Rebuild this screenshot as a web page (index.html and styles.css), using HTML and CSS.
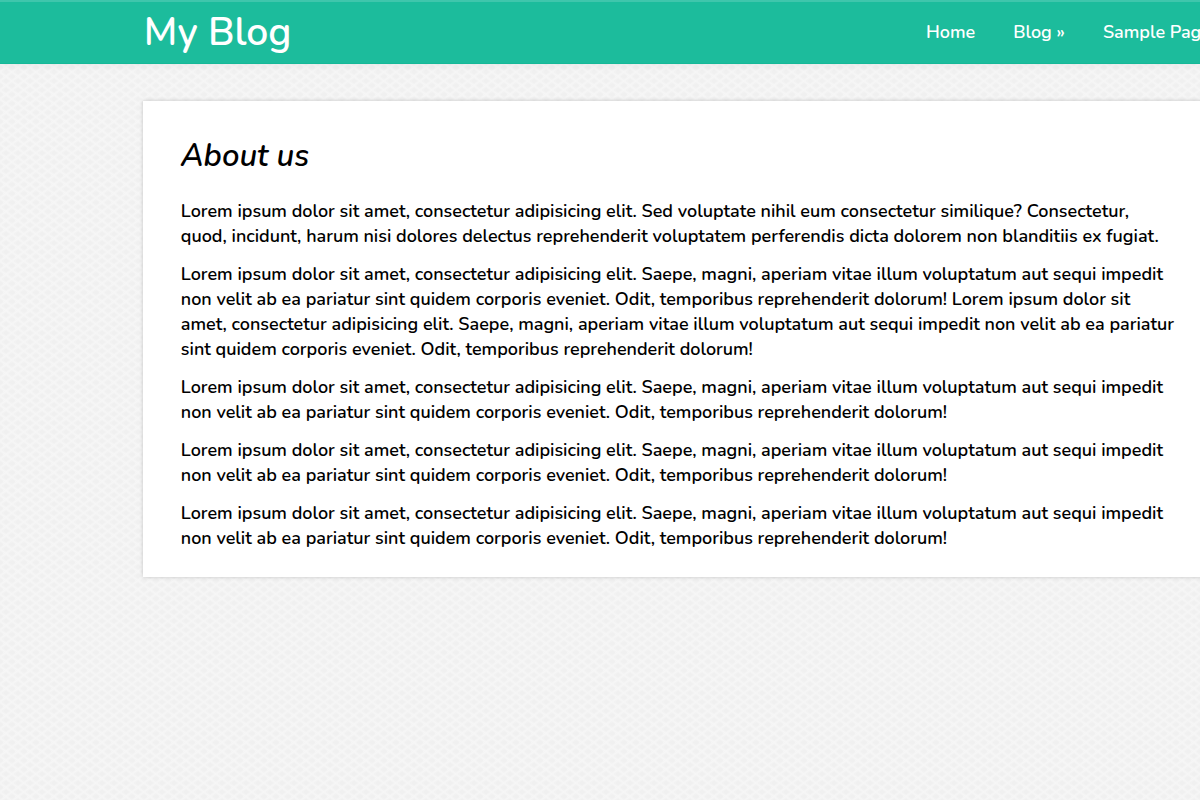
FILE: index.html
```html
<!DOCTYPE html>
<html lang="en">
<head>
    <meta charset="UTF-8">
    <meta name="viewport" content="width=device-width, initial-scale=1">
    <title>My Blog</title>
    <link rel="stylesheet" href="styles.css">
</head>
<body>
    <header class="site-header">
        <div class="container header-inner">
            <a class="logo" href="#">My Blog</a>
            <nav class="main-nav">
                <a href="#">Home</a>
                <a href="#">Blog »</a>
                <a href="#">Sample Page</a>
            </nav>
        </div>
    </header>

    <main class="container">
        <article class="card">
            <h1>About us</h1>
            <p>Lorem ipsum dolor sit amet, consectetur adipisicing elit. Sed voluptate nihil eum consectetur similique? Consectetur, quod, incidunt, harum nisi dolores delectus reprehenderit voluptatem perferendis dicta dolorem non blanditiis ex fugiat.</p>
            <p>Lorem ipsum dolor sit amet, consectetur adipisicing elit. Saepe, magni, aperiam vitae illum voluptatum aut sequi impedit non velit ab ea pariatur sint quidem corporis eveniet. Odit, temporibus reprehenderit dolorum! Lorem ipsum dolor sit amet, consectetur adipisicing elit. Saepe, magni, aperiam vitae illum voluptatum aut sequi impedit non velit ab ea pariatur sint quidem corporis eveniet. Odit, temporibus reprehenderit dolorum!</p>
            <p>Lorem ipsum dolor sit amet, consectetur adipisicing elit. Saepe, magni, aperiam vitae illum voluptatum aut sequi impedit non velit ab ea pariatur sint quidem corporis eveniet. Odit, temporibus reprehenderit dolorum!</p>
            <p>Lorem ipsum dolor sit amet, consectetur adipisicing elit. Saepe, magni, aperiam vitae illum voluptatum aut sequi impedit non velit ab ea pariatur sint quidem corporis eveniet. Odit, temporibus reprehenderit dolorum!</p>
            <p>Lorem ipsum dolor sit amet, consectetur adipisicing elit. Saepe, magni, aperiam vitae illum voluptatum aut sequi impedit non velit ab ea pariatur sint quidem corporis eveniet. Odit, temporibus reprehenderit dolorum!</p>
        </article>
    </main>
</body>
</html>
```

FILE: styles.css
```css
* {
    box-sizing: border-box;
}

body {
    margin: 0;
    min-height: 100vh;
    overflow-x: hidden;
    font-family: Nunito, "Open Sans", sans-serif;
    font-size: 18px;
    font-weight: 600;
    line-height: 25px;
    color: #000;
    background-color: #f0f0f0;
    background-image:
        linear-gradient(to top right, transparent 35%, #f6f6f6 50%, transparent 65%),
        linear-gradient(to bottom right, transparent 35%, #f6f6f6 50%, transparent 65%);
    background-size: 12px 9px;
}

.container {
    width: 90.6%;
    margin-left: 11.9%;
}

.site-header {
    background-color: #1cbc9c;
    border-top: 2px solid #3fc6ac;
    border-bottom: 1px solid #16b898;
    box-shadow: 0 1px 8px rgba(0, 0, 0, 0.06);
}

.header-inner {
    display: flex;
    justify-content: space-between;
    align-items: center;
    height: 61px;
}

.logo {
    padding-left: 1px;
    font-size: 39px;
    line-height: 50px;
    color: #fff;
    text-decoration: none;
}

.main-nav {
    display: flex;
}

.main-nav a {
    padding: 0 19px;
    color: #fff;
    text-decoration: none;
    white-space: nowrap;
}

.card {
    margin-top: 37px;
    padding: 36px 54px 26px 38px;
    background-color: #fff;
    box-shadow: 0 0 4px rgba(0, 0, 0, 0.2);
}

.card h1 {
    margin: 0 0 24px;
    font-size: 31px;
    font-style: italic;
    font-weight: 600;
    line-height: 38px;
}

.card p {
    margin: 0 0 13px;
}

.card p:last-child {
    margin-bottom: 0;
}
```
